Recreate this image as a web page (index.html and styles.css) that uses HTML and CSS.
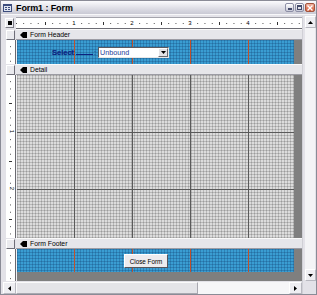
FILE: index.html
```html
<!DOCTYPE html>
<html lang="en">
<head>
    <meta charset="UTF-8">
    <title>Form1 : Form</title>
    <link rel="stylesheet" href="styles.css">
</head>
<body>
    <!-- Form design window -->
    <div class="window">
        <div class="titlebar">
            <svg class="appicon" width="9" height="8" viewBox="0 0 9 8">
                <rect x="0" y="0" width="9" height="8" fill="#3c4c7c"/>
                <rect x="1" y="2" width="7" height="5" fill="#dfe4f0"/>
                <rect x="2" y="3" width="2" height="1" fill="#3c4c7c"/>
                <rect x="5" y="3" width="2" height="1" fill="#3c4c7c"/>
                <rect x="2" y="5" width="2" height="1" fill="#3c4c7c"/>
                <rect x="5" y="5" width="2" height="1" fill="#3c4c7c"/>
            </svg>
            <span class="title">Form1 : Form</span>
            <div class="caption-btns">
                <span class="cbtn"><i class="glyph-min"></i></span>
                <span class="cbtn"><i class="glyph-max"></i></span>
                <span class="cbtn close">
                    <svg width="6" height="6" viewBox="0 0 6 6"><path d="M0.5 0.5L5.5 5.5M5.5 0.5L0.5 5.5" stroke="#fff" stroke-width="1.4"/></svg>
                </span>
            </div>
        </div>

        <div class="frame">
            <div class="designer">
                <!-- horizontal ruler -->
                <div class="row ruler-row">
                    <div class="corner"><span class="form-sel"><i></i></span></div>
                    <div class="hruler">
                        <span class="seg"><b>1</b></span>
                        <span class="seg"><b>2</b></span>
                        <span class="seg"><b>3</b></span>
                        <span class="seg"><b>4</b></span>
                    </div>
                </div>

                <!-- Form Header -->
                <div class="row bar-row">
                    <div class="sel-cell"><span class="sel-box"></span></div>
                    <div class="bar">
                        <svg class="sec-icon" width="7" height="6" viewBox="0 0 7 6"><path d="M0 3L3 0H7V6H3Z" fill="#000"/></svg>
                        Form Header
                    </div>
                </div>
                <div class="row sec sec-header">
                    <div class="vr"><div class="vr-strip"></div></div>
                    <div class="sec-body">
                        <div class="area blue header-area">
                            <span class="lbl">Select</span>
                            <span class="blank"></span><span class="colon">:</span>
                            <div class="combo">
                                <span class="combo-text">Unbound</span>
                                <span class="combo-btn">
                                    <svg width="5" height="3" viewBox="0 0 5 3"><path d="M0 0H5L2.5 3Z" fill="#000"/></svg>
                                </span>
                            </div>
                        </div>
                    </div>
                </div>

                <!-- Detail -->
                <div class="row bar-row">
                    <div class="sel-cell"><span class="sel-box"></span></div>
                    <div class="bar">
                        <svg class="sec-icon" width="7" height="6" viewBox="0 0 7 6"><path d="M0 3L3 0H7V6H3Z" fill="#000"/></svg>
                        Detail
                    </div>
                </div>
                <div class="row sec sec-detail">
                    <div class="vr">
                        <div class="vr-strip vr-detail">
                            <span class="vseg"><b>1</b></span>
                            <span class="vseg"><b>2</b></span>
                        </div>
                    </div>
                    <div class="sec-body">
                        <div class="area grey"></div>
                    </div>
                </div>

                <!-- Form Footer -->
                <div class="row bar-row">
                    <div class="sel-cell"><span class="sel-box"></span></div>
                    <div class="bar">
                        <svg class="sec-icon" width="7" height="6" viewBox="0 0 7 6"><path d="M0 3L3 0H7V6H3Z" fill="#000"/></svg>
                        Form Footer
                    </div>
                </div>
                <div class="row sec sec-footer">
                    <div class="vr"><div class="vr-strip"></div></div>
                    <div class="sec-body">
                        <div class="area blue footer-area">
                            <span class="btn">Close Form</span>
                        </div>
                    </div>
                </div>

                <div class="row sec sec-below">
                    <div class="vr"><div class="vr-strip"></div></div>
                    <div class="sec-body"></div>
                </div>

                <!-- horizontal scrollbar -->
                <div class="hscroll">
                    <span class="sbtn">
                        <svg width="3" height="5" viewBox="0 0 3 5"><path d="M3 0V5L0 2.5Z" fill="#000"/></svg>
                    </span>
                    <span class="hthumb"></span>
                    <span class="htrack"></span>
                    <span class="sbtn">
                        <svg width="3" height="5" viewBox="0 0 3 5"><path d="M0 0V5L3 2.5Z" fill="#000"/></svg>
                    </span>
                </div>
            </div>

            <!-- vertical scrollbar -->
            <div class="vscroll">
                <span class="sbtn vbtn">
                    <svg width="5" height="3" viewBox="0 0 5 3"><path d="M0 3H5L2.5 0Z" fill="#000"/></svg>
                </span>
                <span class="vtrack"></span>
                <span class="sbtn vbtn">
                    <svg width="5" height="3" viewBox="0 0 5 3"><path d="M0 0H5L2.5 3Z" fill="#000"/></svg>
                </span>
                <span class="scorner"></span>
            </div>
        </div>
    </div>
</body>
</html>
```

FILE: styles.css
```css
/* general */
* {
    box-sizing: border-box;
}

body {
    margin: 0;
    width: 317px;
    height: 295px;
    overflow: hidden;
    font-family: "Liberation Sans", Arial, sans-serif;
    background: #fff;
}

/* window frame */
.window {
    width: 317px;
    height: 295px;
    display: flex;
    flex-direction: column;
    background: #e3e2e8;
    border: 1px solid #8a8b96;
}

.titlebar {
    height: 13px;
    flex: none;
    display: flex;
    align-items: center;
    padding: 0 1px 0 2px;
    background: linear-gradient(to bottom, #fbfbfd, #dcdce4 60%, #c9c9d4);
}

.appicon {
    flex: none;
    margin-right: 4px;
}

.title {
    font-size: 9px;
    font-weight: bold;
    color: #000;
    letter-spacing: -0.1px;
}

.caption-btns {
    margin-left: auto;
    display: flex;
    gap: 1px;
}

.cbtn {
    width: 9px;
    height: 9px;
    border: 1px solid #8d8fa6;
    border-radius: 2px;
    background: linear-gradient(to bottom, #ffffff, #c9cad8);
    display: flex;
    align-items: center;
    justify-content: center;
}

.cbtn.close {
    width: 10px;
    border-color: #a3543e;
    background: linear-gradient(to bottom, #f0b2a0, #d55a36);
}

.glyph-min {
    width: 4px;
    height: 2px;
    margin-top: 3px;
    background: #434a6a;
}

.glyph-max {
    width: 5px;
    height: 5px;
    border: 1px solid #434a6a;
    border-top-width: 2px;
}

/* client area */
.frame {
    flex: 1;
    display: flex;
    padding: 1px 1px 0 2px;
    border-top: 1px solid #f7f7f9;
}

.designer {
    width: 299px;
    display: flex;
    flex-direction: column;
}

.row {
    display: flex;
    flex: none;
}

/* rulers */
.ruler-row {
    height: 13px;
}

.corner {
    width: 13px;
    display: flex;
    align-items: center;
    padding-left: 2px;
}

.form-sel {
    width: 9px;
    height: 10px;
    background: #ececf0;
    border: 1px solid;
    border-color: #fff #7a7a84 #7a7a84 #fff;
    display: flex;
    align-items: center;
    justify-content: center;
}

.form-sel i {
    width: 4px;
    height: 4px;
    background: #000;
}

.hruler {
    width: 286px;
    height: 12px;
    margin-top: 1px;
    display: flex;
    padding-left: 2px;
    background-color: #fff;
    border-top: 1px solid #a4a4ac;
    border-bottom: 1px solid #6c6c74;
    background-image:
        linear-gradient(to right, transparent 28px, #333 28px, #333 29px, transparent 29px),
        linear-gradient(to right, #444 1px, transparent 1px);
    background-size: 58px 3px, 7.25px 1px;
    background-repeat: repeat-x, repeat-x;
    background-position: 1px 4px, 7.25px 5px;
}

.seg {
    width: 58px;
    flex: none;
    display: flex;
    justify-content: flex-end;
    align-items: center;
}

.seg b {
    width: 4px;
    font-size: 6px;
    font-weight: normal;
    text-align: center;
    line-height: 6px;
    background: #fff;
    color: #000;
}

/* section bars */
.bar-row {
    height: 11px;
}

.sel-cell {
    width: 13px;
    display: flex;
    align-items: center;
    padding-left: 3px;
}

.sel-box {
    width: 9px;
    height: 10px;
    background: #eaeaee;
    border: 1px solid;
    border-color: #fff #6e6e78 #6e6e78 #fff;
}

.bar {
    width: 286px;
    display: flex;
    align-items: center;
    gap: 3px;
    padding-left: 4px;
    font-size: 6.8px;
    color: #000;
    background: #e6e6ea;
    border-top: 1px solid #fafafa;
    border-bottom: 1px solid #9c9ca4;
}

.sec-icon {
    flex: none;
}

/* sections */
.sec-header {
    height: 24px;
}

.sec-detail {
    height: 163px;
}

.sec-footer {
    height: 23px;
}

.sec-below {
    height: 9px;
}

.vr {
    width: 14px;
    flex: none;
    padding-left: 3px;
    border-right: 1px solid #f2f2f4;
}

.vr-strip {
    width: 10px;
    height: 100%;
    background-color: #fff;
    border-right: 1px solid #6a6a70;
    background-image:
        linear-gradient(to bottom, transparent 28px, #333 28px, #333 29px, transparent 29px),
        linear-gradient(to bottom, #444 1px, transparent 1px);
    background-size: 3px 58px, 1px 7.25px;
    background-repeat: repeat-y, repeat-y;
    background-position: 3px 0, 4px 6.25px;
}

.vr-detail {
    display: flex;
    flex-direction: column;
    padding-top: 2px;
}

.vseg {
    height: 57px;
    flex: none;
    display: flex;
    align-items: flex-end;
    justify-content: center;
}

.vseg b {
    font-size: 6px;
    font-weight: normal;
    line-height: 5px;
    height: 5px;
    width: 6px;
    text-align: center;
    background: #fff;
    transform: rotate(90deg);
}

.sec-body {
    width: 285px;
    background: #7f7f7f;
}

.area {
    width: 277px;
    height: 100%;
}

.blue {
    background-color: #3a9dd2;
    background-image:
        linear-gradient(to right, transparent 57px, #c0502a 57px, #c0502a 58px, transparent 58px),
        repeating-linear-gradient(to right, rgba(15, 60, 110, 0.28) 0 1px, transparent 1px 3px),
        repeating-linear-gradient(to bottom, rgba(15, 60, 110, 0.28) 0 1px, transparent 1px 3px);
    background-size: 58px 100%, auto, auto;
    background-repeat: repeat-x, repeat, repeat;
}

.grey {
    background-color: #dcdcdc;
    background-image:
        linear-gradient(to right, transparent 57px, #5a5a5a 57px, #5a5a5a 58px, transparent 58px),
        linear-gradient(to bottom, transparent 57px, #5a5a5a 57px, #5a5a5a 58px, transparent 58px,
            transparent 114px, #5a5a5a 114px, #5a5a5a 115px, transparent 115px),
        repeating-linear-gradient(to right, rgba(0, 0, 0, 0.16) 0 1px, transparent 1px 3px),
        repeating-linear-gradient(to bottom, rgba(0, 0, 0, 0.16) 0 1px, transparent 1px 3px);
    background-size: 58px 100%, 100% 100%, auto, auto;
    background-repeat: repeat-x, no-repeat, repeat, repeat;
}

/* header controls */
.header-area {
    display: flex;
    align-items: center;
    padding-left: 35px;
}

.lbl {
    font-size: 7.5px;
    font-weight: 700;
    color: #0c2280;
    -webkit-text-stroke: 0.2px #0c2280;
}

.blank {
    width: 17px;
    height: 6px;
    margin-left: 2px;
    border-bottom: 1px solid #0c2280;
}

.colon {
    font-size: 7px;
    color: #0c2280;
    margin: 0 1px 0 1px;
}

.combo {
    width: 71px;
    height: 11px;
    margin-left: 1px;
    display: flex;
    align-items: center;
    background: #fff;
    border: 1px solid;
    border-color: #5a5a60 #e8e8e8 #e8e8e8 #5a5a60;
}

.combo-text {
    flex: 1;
    font-size: 7.2px;
    color: #1c3c98;
    padding-left: 1px;
}

.combo-btn {
    width: 10px;
    height: 9px;
    display: flex;
    align-items: center;
    justify-content: center;
    background: #e4e3e6;
    border: 1px solid;
    border-color: #fff #6a6a70 #6a6a70 #fff;
}

/* footer button */
.footer-area {
    display: flex;
    align-items: flex-start;
    padding: 5px 0 0 107px;
}

.btn {
    width: 44px;
    height: 14px;
    display: flex;
    align-items: center;
    justify-content: center;
    font-size: 6.3px;
    color: #000;
    background: #ecebee;
    border: 1px solid;
    border-color: #fff #55555c #55555c #fff;
}

/* scrollbars */
.hscroll {
    height: 13px;
    flex: none;
    display: flex;
    align-items: center;
    padding-top: 1px;
}

.sbtn {
    width: 13px;
    height: 12px;
    flex: none;
    display: flex;
    align-items: center;
    justify-content: center;
    background: #eeeef2;
    border: 1px solid;
    border-color: #fff #b8b8c0 #b8b8c0 #fff;
}

.hthumb {
    width: 182px;
    height: 12px;
    background: #e4e4e8;
    border: 1px solid;
    border-color: #fbfbfb #a8a8b0 #a8a8b0 #fbfbfb;
}

.htrack {
    flex: 1;
    height: 12px;
    background: #f6f6f8;
}

.vscroll {
    width: 13px;
    display: flex;
    flex-direction: column;
    padding-left: 2px;
    border-left: 1px solid #d0d0d6;
}

.vbtn {
    width: 11px;
}

.vtrack {
    flex: 1;
    background: #f4f4f6;
}

.scorner {
    height: 13px;
    flex: none;
    background: #e3e2e8;
}
```
